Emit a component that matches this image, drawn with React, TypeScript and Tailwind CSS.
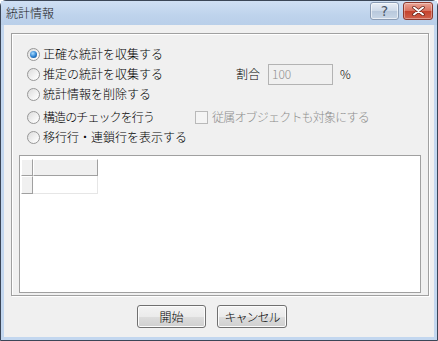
import React from 'react'

const FONT = { fontFamily: '"Meiryo UI", "Noto Sans CJK JP", "Noto Sans", sans-serif' }

function Radio({ checked = false }: { checked?: boolean }) {
  return (
    <span className="relative flex h-[13px] w-[13px] shrink-0 items-center justify-center rounded-full border border-[#979797] bg-[linear-gradient(135deg,#dcdcdc,#f7f7f7_70%,#ffffff)]">
      {checked && (
        <span className="h-[7px] w-[7px] rounded-full bg-[radial-gradient(circle_at_40%_35%,#a8dcff,#2a7fcf_55%,#0d3f78)]" />
      )}
    </span>
  )
}

function Row({ children, className = '' }: { children: React.ReactNode; className?: string }) {
  return <div className={`flex h-[20px] items-center ${className}`}>{children}</div>
}

function HeaderCell({ w, h }: { w: string; h: string }) {
  return (
    <div
      className={`${w} ${h} border-t border-l border-t-white border-l-white border-r border-b border-r-[#a0a0a0] border-b-[#a0a0a0] bg-[#f0f0f0]`}
    />
  )
}

export default function App() {
  return (
    <div className="h-[341px] w-[438px] overflow-hidden bg-white text-[12px] font-light text-black" style={FONT}>
      <div className="flex h-full w-full flex-col rounded-t-[6px] border border-[#3b4657] bg-[#c3d7ef]">
        {/* Barre de titre */}
        <div className="flex h-[24px] items-start bg-[linear-gradient(#cfdff3,#bed3ec_60%,#b9cfe9)] pl-[5px]">
          <span className="mt-[4px] text-[12px] leading-[16px] text-[#1b1b1b]">統計情報</span>
          <div className="ml-auto mr-[4px] mt-[1px] flex gap-[4px]">
            <div className="flex h-[18px] w-[29px] items-center justify-center rounded-[3px] border border-[#8a9bb3] bg-[linear-gradient(#e8eef6,#cdd9e8_50%,#b8c8dc_51%,#c8d6e6)] text-[14px] font-normal leading-none text-[#4a5666] shadow-[inset_0_0_0_1px_rgba(255,255,255,0.6)]" style={{ fontFamily: '"DejaVu Sans", sans-serif' }}>
              ?
            </div>
            <div className="flex h-[18px] w-[30px] items-center justify-center rounded-[3px] border border-[#8d3a2e] bg-[linear-gradient(#eaa596,#d9705d_50%,#c4422c_51%,#d0614c)] shadow-[inset_0_0_0_1px_rgba(255,255,255,0.35)]">
              <svg width="13" height="10" viewBox="0 0 13 10">
                <path d="M2 1.5 L11 8.5 M11 1.5 L2 8.5" stroke="#5a1d14" strokeWidth="3.4" strokeLinecap="round" />
                <path d="M2 1.5 L11 8.5 M11 1.5 L2 8.5" stroke="#ffffff" strokeWidth="2" strokeLinecap="round" />
              </svg>
            </div>
          </div>
        </div>

        {/* Zone client */}
        <div className="mx-[3px] mb-[3px] flex flex-1 flex-col bg-[#f0f0f0]">
          <div className="ml-[7px] mr-[5px] mt-[8px] flex h-[263px] flex-col border border-[#a0a0a0] pb-[2px] pl-[15px] pt-[10px] shadow-[inset_1px_1px_0_#ffffff,1px_1px_0_#ffffff]">
            <Row>
              <Radio checked />
              <span className="ml-[3px]">正確な統計を収集する</span>
            </Row>
            <Row>
              <div className="flex w-[209px] items-center">
                <Radio />
                <span className="ml-[3px]">推定の統計を収集する</span>
              </div>
              <span>割合</span>
              <div className="ml-[8px] flex h-[21px] w-[65px] items-center border border-[#b3b3b3] bg-[#f0f0f0] pl-[3px] text-[#8f8f8f]">
                100
              </div>
              <span className="ml-[7px]">%</span>
            </Row>
            <Row>
              <Radio />
              <span className="ml-[3px]">統計情報を削除する</span>
            </Row>
            <Row className="mt-[3px]">
              <div className="flex w-[168px] items-center">
                <Radio />
                <span className="ml-[3px] tracking-[-0.9px]">構造のチェックを行う</span>
              </div>
              <span className="h-[13px] w-[13px] border border-[#b9b9b9] bg-[#f4f4f4]" />
              <span className="ml-[4px] tracking-[-0.8px] text-[#8d8d8d]">従属オブジェクトも対象にする</span>
            </Row>
            <Row>
              <Radio />
              <span className="ml-[3px]">移行行・連鎖行を表示する</span>
            </Row>

            {/* Liste */}
            <div className="-ml-[8px] mr-[7px] mt-[8px] flex flex-1 flex-col border border-[#a0a0a0] bg-white pl-[1px] pt-[3px]">
              <div className="flex">
                <HeaderCell w="w-[12px]" h="h-[17px]" />
                <HeaderCell w="w-[65px]" h="h-[17px]" />
              </div>
              <div className="flex">
                <HeaderCell w="w-[12px]" h="h-[18px]" />
                <div className="h-[18px] w-[65px] border-r border-b border-[#e6e6e6] bg-white" />
              </div>
            </div>
          </div>

          {/* Boutons */}
          <div className="ml-[133px] mt-[9px] flex gap-[11px]">
            <button className="h-[23px] w-[69px] rounded-[3px] border border-[#707070] bg-[linear-gradient(#f3f3f3,#ebebeb_50%,#dddddd_51%,#cfcfcf)] text-[12px] leading-none shadow-[inset_0_0_0_1px_#fcfcfc]">
              開始
            </button>
            <button className="h-[23px] w-[70px] rounded-[3px] border border-[#707070] bg-[linear-gradient(#f3f3f3,#ebebeb_50%,#dddddd_51%,#cfcfcf)] text-[12px] leading-none tracking-[-1px] shadow-[inset_0_0_0_1px_#fcfcfc]">
              キャンセル
            </button>
          </div>
        </div>
      </div>
    </div>
  )
}
